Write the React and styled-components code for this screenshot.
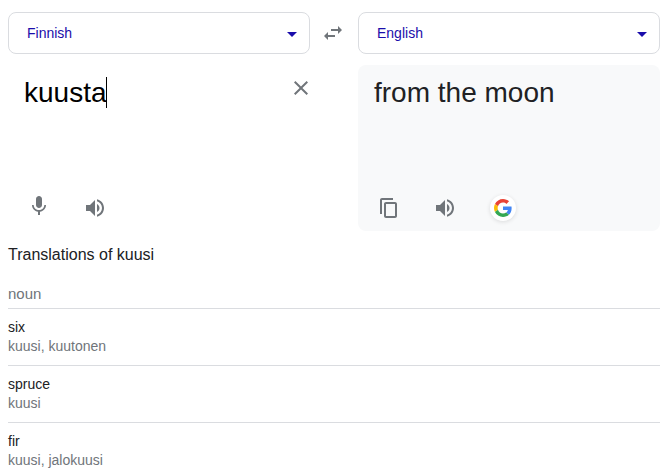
import React from 'react';
import styled, { createGlobalStyle } from 'styled-components';

const GlobalStyle = createGlobalStyle`
    body {
        margin: 0;
        background: #fff;
        color: #202124;
        font-family: "Liberation Sans", Arial, sans-serif;
        font-size: 14px;
    }

    * {
        box-sizing: border-box;
    }
`

const Page = styled.main`
    padding: 12px 11px 0 8px;
`

const Languages = styled.div`
    display: grid;
    grid-template-columns: 1fr 48px 1fr;
    align-items: center;
`

const Panels = styled.div`
    display: grid;
    grid-template-columns: 1fr 1fr;
    gap: 48px;
    margin-top: 11px;
`

const SelectWrap = styled.div`
    position: relative;
`

const LanguageSelect = styled.select`
    appearance: none;
    display: block;
    width: 100%;
    height: 42px;
    padding: 0 32px 0 18px;
    border: 1px solid #dadce0;
    border-radius: 8px;
    background: #fff;
    color: #1a0dab;
    font: inherit;
    cursor: pointer;
`

const Arrow = styled.svg`
    position: absolute;
    right: 13px;
    top: 20px;
    pointer-events: none;
`

const IconButton = styled.button`
    display: flex;
    align-items: center;
    justify-content: center;
    width: ${props => props.$size || 40}px;
    height: ${props => props.$size || 40}px;
    padding: 0;
    border: 0;
    background: none;
    color: #70757a;
    cursor: pointer;
`

const SwapButton = styled(IconButton)`
    width: 46px;
`

const Panel = styled.section`
    display: flex;
    flex-direction: column;
    justify-content: space-between;
    min-width: 0;
    min-height: 166px;
    padding: 12px 0 3px;
    border-radius: 8px;
    background: ${props => props.$filled ? '#f8f9fa' : '#fff'};
`

const TextRow = styled.div`
    display: flex;
    align-items: flex-start;
    padding-left: 16px;
`

const SourceText = styled.textarea`
    field-sizing: content;
    display: block;
    max-width: 240px;
    padding: 0;
    border: 0;
    outline: 0;
    resize: none;
    overflow: hidden;
    background: none;
    caret-color: transparent;
    color: #000;
    font: inherit;
    font-size: 28px;
    line-height: 32px;
`

const Caret = styled.span`
    width: 1px;
    height: 31px;
    margin-left: -1px;
    background: #000;
`

const ClearButton = styled(IconButton)`
    margin: 2px 0 0 auto;
`

const ResultText = styled.output`
    font-size: 28px;
    line-height: 32px;
`

const Actions = styled.div`
    display: flex;
    gap: 16px;
    padding-left: 11px;
`

const GoogleLink = styled.a`
    display: flex;
    align-items: center;
    justify-content: center;
    width: 44px;
    height: 40px;
`

const GoogleBadge = styled.span`
    display: flex;
    align-items: center;
    justify-content: center;
    width: 26px;
    height: 26px;
    border-radius: 50%;
    background: #fff;
    box-shadow: 0 1px 4px rgba(0, 0, 0, 0.12);
`

const Title = styled.h2`
    margin: 14px 0 19px;
    font-size: 16px;
    font-weight: 400;
    line-height: 20px;
`

const PartOfSpeech = styled.h3`
    margin: 0;
    padding-bottom: 5px;
    color: #70757a;
    font-size: 15px;
    font-weight: 400;
    line-height: 19px;
`

const WordList = styled.dl`
    margin: 0;
`

const WordRow = styled.div`
    padding-top: 9px;
    border-top: 1px solid #dadce0;
    line-height: 19px;

    &:not(:last-child) {
        padding-bottom: 9px;
    }
`

const Word = styled.dt`
    color: #202124;
`

const Synonyms = styled.dd`
    margin: 0;
    color: #70757a;
`

const words = [
    { word: 'six', synonyms: 'kuusi, kuutonen' },
    { word: 'spruce', synonyms: 'kuusi' },
    { word: 'fir', synonyms: 'kuusi, jalokuusi' }
]

const Icon = ({ d, size = 24, viewBox = '0 0 24 24' }) => (
    <svg width={size} height={size} viewBox={viewBox} fill="currentColor" aria-hidden="true">
        <path d={d} />
    </svg>
)

const paths = {
    swap: 'M6.99 11L3 15l3.99 4v-3H14v-2H6.99v-3zM21 9l-3.99-4v3H10v2h7.01v3L21 9z',
    close: 'M19 6.41L17.59 5 12 10.59 6.41 5 5 6.41 10.59 12 5 17.59 6.41 19 12 13.41 17.59 19 19 17.59 13.41 12z',
    mic: 'M12 14c1.66 0 3-1.34 3-3V5c0-1.66-1.34-3-3-3S9 3.34 9 5v6c0 1.66 1.34 3 3 3zM17.3 11c0 3-2.54 5.1-5.3 5.1S6.7 14 6.7 11H5c0 3.41 2.72 6.23 6 6.72V21h2v-3.28c3.28-.48 6-3.3 6-6.72h-1.7z',
    speaker: 'M3 9v6h4l5 5V4L7 9H3zm13.5 3c0-1.77-1.02-3.29-2.5-4.03v8.05c1.48-.73 2.5-2.25 2.5-4.02zM14 3.23v2.06c2.89.86 5 3.54 5 6.71s-2.11 5.85-5 6.71v2.06c4.01-.91 7-4.49 7-8.77s-2.99-7.86-7-8.77z',
    copy: 'M16 2H5c-1.1 0-2 .9-2 2v14h2V4h11V2zM18 6H9c-1.1 0-2 .9-2 2v12c0 1.1.9 2 2 2h9c1.1 0 2-.9 2-2V8c0-1.1-.9-2-2-2zm0 14H9V8h9v12z'
}

const GoogleLogo = () => (
    <svg width="18" height="18" viewBox="0 0 48 48" aria-hidden="true">
        <path fill="#EA4335" d="M24 9.5c3.54 0 6.71 1.22 9.21 3.6l6.85-6.85C35.9 2.38 30.47 0 24 0 14.62 0 6.51 5.38 2.56 13.22l7.98 6.19C12.43 13.72 17.74 9.5 24 9.5z" />
        <path fill="#4285F4" d="M46.98 24.55c0-1.57-.15-3.09-.38-4.55H24v9.02h12.94c-.58 2.96-2.26 5.48-4.78 7.18l7.73 6c4.51-4.18 7.09-10.36 7.09-17.65z" />
        <path fill="#FBBC05" d="M10.53 28.59c-.48-1.45-.76-2.99-.76-4.59s.27-3.14.76-4.59l-7.98-6.19C.92 16.46 0 20.12 0 24c0 3.88.92 7.54 2.56 10.78l7.97-6.19z" />
        <path fill="#34A853" d="M24 48c6.48 0 11.93-2.13 15.89-5.81l-7.73-6c-2.15 1.45-4.92 2.3-8.16 2.3-6.26 0-11.57-4.22-13.47-9.91l-7.98 6.19C6.51 42.62 14.62 48 24 48z" />
    </svg>
)

const LanguagePicker = ({ label, value, onChange }) => (
    <SelectWrap>
        <LanguageSelect aria-label={label} value={value} onChange={e => onChange(e.target.value)}>
            <option>Finnish</option>
            <option>English</option>
        </LanguageSelect>
        <Arrow width="10" height="5" viewBox="0 0 10 5" aria-hidden="true">
            <path d="M0 0h10L5 5z" fill="#1a0dab" />
        </Arrow>
    </SelectWrap>
)

export default class App extends React.Component {
    state = {
        from: 'Finnish',
        to: 'English',
        text: 'kuusta'
    }

    swap = () => {
        this.setState({
            from: this.state.to,
            to: this.state.from
        })
    }

    render() {
        return (
            <Page>
                <GlobalStyle />
                <Languages>
                    <LanguagePicker
                        label="Source language"
                        value={this.state.from}
                        onChange={from => this.setState({ from })} />
                    <SwapButton type="button" aria-label="Swap languages" onClick={this.swap}>
                        <Icon d={paths.swap} />
                    </SwapButton>
                    <LanguagePicker
                        label="Target language"
                        value={this.state.to}
                        onChange={to => this.setState({ to })} />
                </Languages>
                <Panels>
                    <Panel>
                        <TextRow>
                            <SourceText
                                aria-label="Source text"
                                rows={1}
                                spellCheck={false}
                                value={this.state.text}
                                onChange={e => this.setState({ text: e.target.value })} />
                            <Caret />
                            <ClearButton
                                type="button"
                                $size={18}
                                aria-label="Clear text"
                                onClick={() => this.setState({ text: '' })}>
                                <Icon d={paths.close} size={18} viewBox="3 3 18 18" />
                            </ClearButton>
                        </TextRow>
                        <Actions>
                            <IconButton type="button" aria-label="Speak">
                                <Icon d={paths.mic} viewBox="0 2 24 24" />
                            </IconButton>
                            <IconButton type="button" aria-label="Listen to source">
                                <Icon d={paths.speaker} />
                            </IconButton>
                        </Actions>
                    </Panel>
                    <Panel $filled>
                        <TextRow>
                            <ResultText>from the moon</ResultText>
                        </TextRow>
                        <Actions>
                            <IconButton type="button" aria-label="Copy">
                                <Icon d={paths.copy} />
                            </IconButton>
                            <IconButton type="button" aria-label="Listen to translation">
                                <Icon d={paths.speaker} />
                            </IconButton>
                            <GoogleLink href="#search" aria-label="Search with Google">
                                <GoogleBadge>
                                    <GoogleLogo />
                                </GoogleBadge>
                            </GoogleLink>
                        </Actions>
                    </Panel>
                </Panels>
                <Title>Translations of kuusi</Title>
                <PartOfSpeech>noun</PartOfSpeech>
                <WordList>
                    {words.map(({ word, synonyms }) => (
                        <WordRow key={word}>
                            <Word>{word}</Word>
                            <Synonyms>{synonyms}</Synonyms>
                        </WordRow>
                    ))}
                </WordList>
            </Page>
        )
    }
}
